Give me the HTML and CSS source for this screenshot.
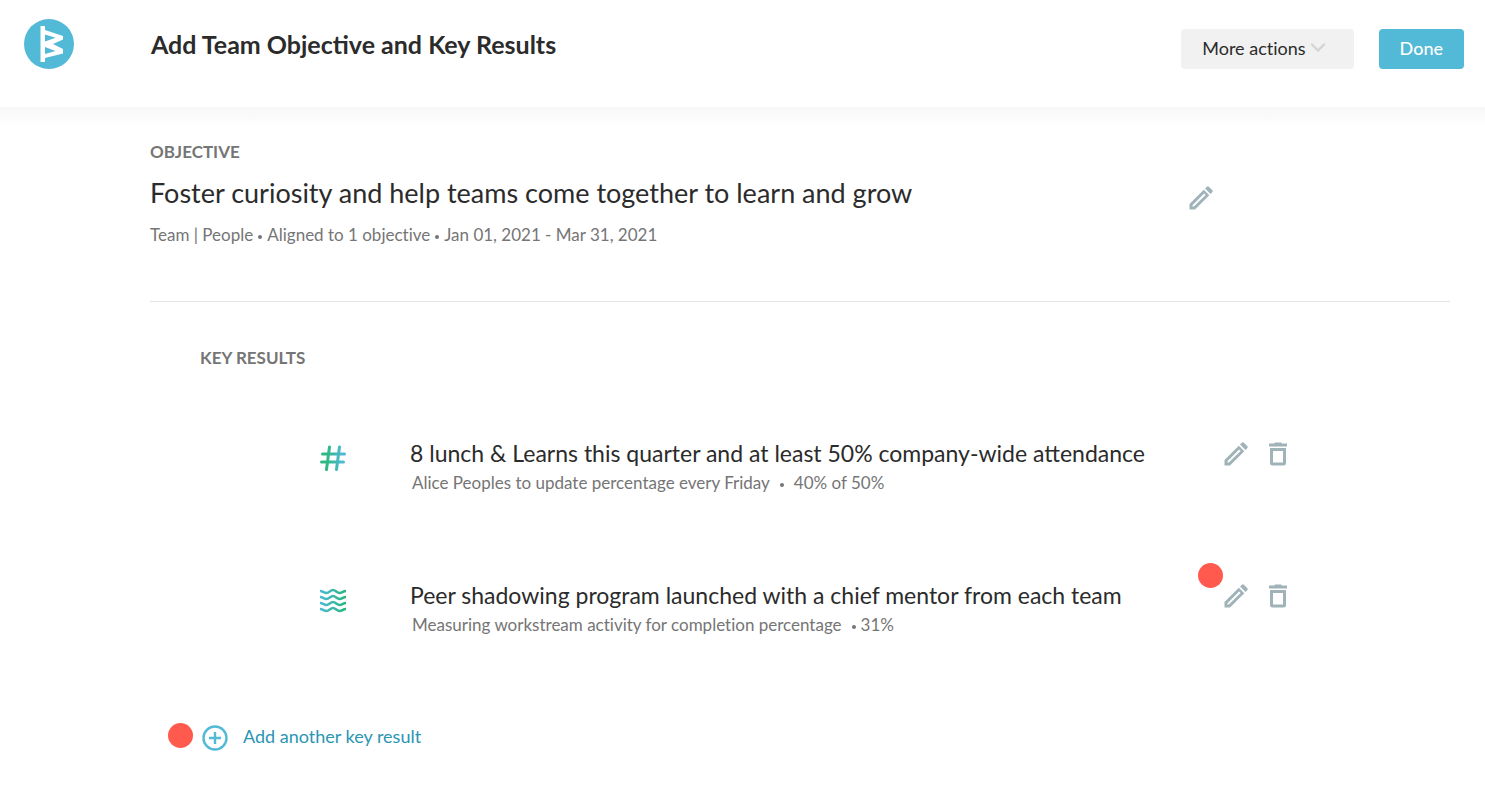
FILE: index.html
```html
<!DOCTYPE html>
<html lang="en">
<head>
  <meta charset="UTF-8" />
  <meta name="viewport" content="width=device-width, initial-scale=1.0"/>
  <title>Add Team Objective and Key Results</title>
  <link rel="stylesheet" href="styles.css">
</head>
<body>

  <!-- Shared icons -->
  <svg class="sprite" aria-hidden="true">
    <symbol id="pencil" viewBox="0 0 24 24">
      <path d="M0.500 23.500v-5.500L14.800 3.700l5.500 5.500L6 23.500z M3.500 20.500h1.300L16.600 8.900 15.100 7.400 3.500 19.200z" fill-rule="evenodd"/>
      <path d="M16.100 2.500l1.700-1.700a1.500 1.500 0 0 1 2.100 0l3.300 3.300a1.500 1.500 0 0 1 0 2.100l-1.700 1.700z"/>
    </symbol>
    <symbol id="trash" viewBox="0 0 20 24">
      <path d="M1 1.500h5l1-1h6l1 1h5v3H1z"/>
      <path d="M2 6h16V21a2.500 2.500 0 0 1-2.500 2.500h-11A2.500 2.500 0 0 1 2 21z M5 9v11.500h10V9z" fill-rule="evenodd"/>
    </symbol>
  </svg>

  <header class="header">
    <a href="#" class="logo" aria-label="Home">
      <svg viewBox="0 0 50 50" width="50" height="50">
        <circle cx="25" cy="25" r="25" fill="#52b9d6"/>
        <path d="M16.500 7H21V11L39 17V20.500L29 25L39 30V34.500L21 39V43H16.500z M21 15.500V22.500L31.500 18.700z M21 28V35L31.500 32z" fill="#fff" fill-rule="evenodd"/>
      </svg>
    </a>
    <h1 class="title">Add Team Objective and Key Results</h1>
    <div class="header-actions">
      <button type="button" class="btn more-btn">More actions
        <svg viewBox="0 0 16 10" width="16" height="10"><path d="M2 1.500l6 6 6-6" fill="none" stroke="#d4d4d4" stroke-width="2.400" stroke-linecap="round"/></svg>
      </button>
      <button type="button" class="btn done-btn">Done</button>
    </div>
  </header>

  <main class="content">
    <!-- Objective summary -->
    <section class="objective">
      <div class="objective-text">
        <h2 class="label">OBJECTIVE</h2>
        <p class="objective-name">Foster curiosity and help teams come together to learn and grow</p>
        <p class="meta"><span>Team | People</span><i class="sep"></i><span>Aligned to 1 objective</span><i class="sep"></i><span>Jan 01, 2021 - Mar 31, 2021</span></p>
      </div>
      <button type="button" class="icon-btn edit-objective" aria-label="Edit objective"><svg width="24" height="24"><use href="#pencil"/></svg></button>
    </section>

    <!-- Key results list -->
    <section class="key-results">
      <h2 class="label">KEY RESULTS</h2>
      <ul class="results">
        <li class="result">
          <svg class="type-icon" viewBox="0 0 26 26" width="26" height="26">
            <defs>
              <linearGradient id="hashFill" gradientUnits="userSpaceOnUse" x1="4" y1="0" x2="22" y2="0">
                <stop offset="0.200" stop-color="#2fb886"/>
                <stop offset="1" stop-color="#4fb9d5"/>
              </linearGradient>
            </defs>
            <path d="M9.500 2L6.500 24.500 M19.500 2L16.500 24.500 M2.500 9h22 M1.500 17h22" fill="none" stroke="url(#hashFill)" stroke-width="3" stroke-linecap="round"/>
          </svg>
          <div class="result-text">
            <h3 class="result-name">8 lunch &amp; Learns this quarter and at least 50% company-wide attendance</h3>
            <p class="meta result-meta"><span>Alice Peoples to update percentage every Friday</span><i class="sep sep-wide"></i><span>40% of 50%</span></p>
          </div>
          <div class="result-actions">
            <button type="button" class="icon-btn" aria-label="Edit key result"><svg width="24" height="24"><use href="#pencil"/></svg></button>
            <button type="button" class="icon-btn" aria-label="Delete key result"><svg width="20" height="24"><use href="#trash"/></svg></button>
          </div>
        </li>
        <li class="result">
          <svg class="type-icon" viewBox="0 0 26 26" width="26" height="26">
            <defs>
              <linearGradient id="waveFill" gradientUnits="userSpaceOnUse" x1="0" y1="0" x2="26" y2="0">
                <stop offset="0" stop-color="#4fb9d5"/>
                <stop offset="1" stop-color="#26b67c"/>
              </linearGradient>
            </defs>
            <path d="M0 4c3 0 4 2 6.500 2s4-3 6.500-3 4 3 6.500 3 3.500-2 6.500-2 M0 10c3 0 4 2 6.500 2s4-3 6.500-3 4 3 6.500 3 3.500-2 6.500-2 M0 16c3 0 4 2 6.500 2s4-3 6.500-3 4 3 6.500 3 3.500-2 6.500-2 M0 22c3 0 4 2 6.500 2s4-3 6.500-3 4 3 6.500 3 3.500-2 6.500-2" fill="none" stroke="url(#waveFill)" stroke-width="2.600"/>
          </svg>
          <div class="result-text">
            <h3 class="result-name">Peer shadowing program launched with a chief mentor from each team</h3>
            <p class="meta result-meta"><span>Measuring workstream activity for completion percentage</span><i class="sep sep-late"></i><span>31%</span></p>
          </div>
          <div class="result-actions">
            <button type="button" class="icon-btn" aria-label="Edit key result"><svg width="24" height="24"><use href="#pencil"/></svg><span class="dot dot-badge"></span></button>
            <button type="button" class="icon-btn" aria-label="Delete key result"><svg width="20" height="24"><use href="#trash"/></svg></button>
          </div>
        </li>
      </ul>
    </section>

    <div class="add-row">
      <span class="dot"></span>
      <a href="#" class="add-link">
        <svg class="add-icon" viewBox="0 0 26 26" width="26" height="26"><path d="M13 7v12 M7 13h12" stroke="#52b9d6" stroke-width="2.400"/><circle cx="13" cy="13" r="11.500" fill="none" stroke="#52b9d6" stroke-width="2.400"/></svg>
        <span>Add another key result</span>
      </a>
    </div>
  </main>

</body>
</html>
```

FILE: styles.css
```css
* {
  box-sizing: border-box;
}
body {
  margin: 0;
  font-family: Lato, sans-serif;
  color: #2b2b2b;
  background: #fff;
}
h1, h2, h3, p, ul {
  margin: 0;
  padding: 0;
}
.sprite {
  display: none;
}
svg {
  display: block;
}
/* Top bar */
.header {
  display: flex;
  align-items: flex-start;
  padding: 19px 21px 38px 24px;
}
.logo {
  width: 50px;
  margin-right: 77px;
}
.title {
  flex: 1;
  font-size: 25px;
  font-weight: 700;
  line-height: 50px;
}
.header-actions {
  display: flex;
  gap: 25px;
  padding-top: 10px;
}
.btn {
  display: flex;
  align-items: center;
  gap: 4px;
  height: 40px;
  padding: 0 21px 2px;
  border: none;
  border-radius: 4px;
  font-family: inherit;
  font-size: 18px;
  font-variant-ligatures: none;
  cursor: pointer;
}
.more-btn {
  padding-right: 28px;
  background: #f1f1f1;
  color: #2b2b2b;
}
.done-btn {
  background: #52b9d6;
  color: #fff;
  font-weight: 500;
}
/* Page body */
.content {
  padding: 32px 35px 36px 150px;
  background: linear-gradient(#f7f7f7, #fff 20px);
}
.label {
  font-size: 17px;
  font-weight: 700;
  line-height: 26px;
  color: #757575;
}
.meta {
  display: flex;
  align-items: center;
  font-size: 17px;
  font-variant-ligatures: none;
  line-height: 26px;
  color: #757575;
}
.sep {
  width: 4px;
  height: 4px;
  margin: 4px 5px 0;
  border-radius: 50%;
  background: #757575;
}
.sep-wide {
  margin: 4px 10px 0;
}
.sep-late {
  margin-left: 10px;
}
.objective {
  display: flex;
  align-items: flex-start;
  justify-content: space-between;
  padding: 0 237px 53px 0;
  border-bottom: 1px solid #e4e4e4;
}
.objective-name {
  margin: 8px 0 9px;
  font-size: 27px;
  font-variant-ligatures: none;
  line-height: 40px;
}
.icon-btn {
  position: relative;
  padding: 0;
  border: none;
  background: none;
  color: #9fb3b8;
  fill: currentColor;
  cursor: pointer;
}
.edit-objective {
  margin-top: 47px;
}
/* Key results */
.key-results {
  padding: 43px 162px 0 50px;
}
.results {
  display: flex;
  flex-direction: column;
  gap: 84px;
  padding: 67px 0 0 120px;
  list-style: none;
}
.result {
  display: flex;
  align-items: flex-start;
}
.type-icon {
  margin: 7px 64px 0 0;
}
.result-text {
  flex: 1;
}
.result-name {
  margin-bottom: 2px;
  font-size: 23px;
  font-weight: 400;
  line-height: 30px;
}
.result-meta {
  padding-left: 2px;
}
.result-actions {
  display: flex;
  gap: 20px;
  padding-top: 4px;
}
.dot {
  width: 25px;
  height: 25px;
  border-radius: 50%;
  background: #ff5a4d;
}
.dot-badge {
  position: absolute;
  top: -21px;
  left: -26px;
}
/* Add row */
.add-row {
  display: flex;
  align-items: flex-start;
  gap: 9px;
  padding: 85px 0 0 18px;
}
.add-link {
  display: flex;
  align-items: flex-start;
  gap: 15px;
  font-size: 18px;
  line-height: 26px;
  color: #2b95b4;
  text-decoration: none;
}
.add-icon {
  margin-top: 2px;
}
```
